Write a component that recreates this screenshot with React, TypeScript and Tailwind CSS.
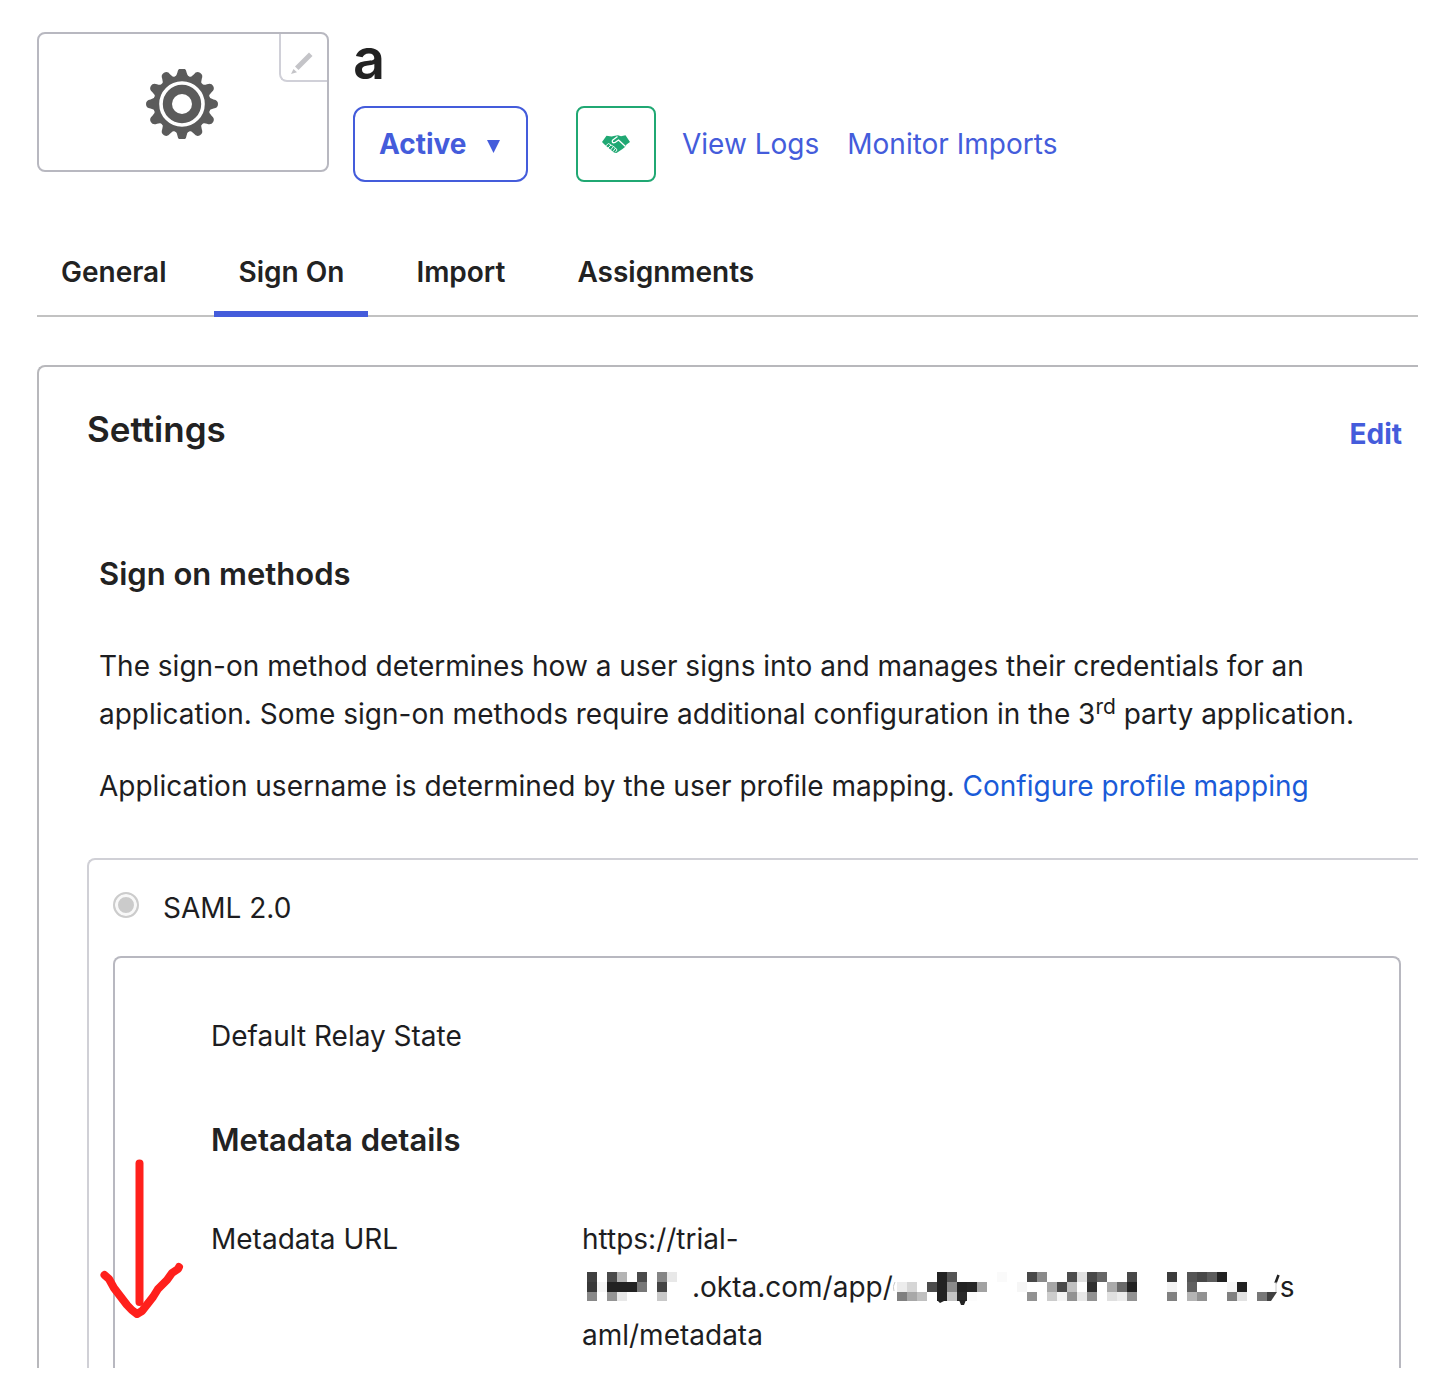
import React from "react";

type Cell = [col: number, row: number, shade: string];

const hostCells: Cell[] = [
  [0, 0, "#404040"], [2, 0, "#4a4a4a"], [3, 0, "#b4b4b4"], [5, 0, "#4a4a4a"], [7, 0, "#858585"], [8, 0, "#e8e8e8"],
  [0, 1, "#383838"], [1, 1, "#f5f5f5"], [2, 1, "#222222"], [3, 1, "#222222"], [4, 1, "#222222"], [5, 1, "#777777"], [7, 1, "#444444"],
  [0, 2, "#888888"], [2, 2, "#949494"], [3, 2, "#e8e8e8"], [7, 2, "#c8c8c8"],
];

const pathCells: Cell[] = [
  [4, 0, "#222222"], [5, 0, "#555555"], [10, 0, "#fafafa"], [13, 0, "#484848"], [14, 0, "#8a8a8a"], [17, 0, "#4c4c4c"],
  [18, 0, "#e0e0e0"], [19, 0, "#484848"], [20, 0, "#666666"], [23, 0, "#484848"], [27, 0, "#3c3c3c"], [29, 0, "#555555"],
  [30, 0, "#484848"], [31, 0, "#5c5c5c"], [32, 0, "#222222"],
  [0, 1, "#ececec"], [1, 1, "#d6d6d6"], [3, 1, "#4c4c4c"], [4, 1, "#222222"], [5, 1, "#8a8a8a"], [6, 1, "#222222"],
  [7, 1, "#262626"], [8, 1, "#a2a2a2"], [12, 1, "#f6f6f6"], [15, 1, "#a6a6a6"], [16, 1, "#4a4a4a"], [17, 1, "#c0c0c0"],
  [19, 1, "#303030"], [21, 1, "#aaaaaa"], [22, 1, "#6a6a6a"], [23, 1, "#222222"], [27, 1, "#f2f2f2"], [29, 1, "#606060"],
  [33, 1, "#f6f6f6"], [34, 1, "#222222"],
  [0, 2, "#808080"], [1, 2, "#a8a8a8"], [2, 2, "#c0c0c0"], [4, 2, "#222222"], [5, 2, "#c4c4c4"], [6, 2, "#2a2a2a"],
  [7, 2, "#fcfcfc"], [13, 2, "#929292"], [15, 2, "#cccccc"], [16, 2, "#f4f4f4"], [17, 2, "#929292"], [18, 2, "#e8e8e8"],
  [19, 2, "#929292"], [21, 2, "#e0e0e0"], [22, 2, "#ececec"], [23, 2, "#929292"], [27, 2, "#808080"], [29, 2, "#b4b4b4"],
  [30, 2, "#929292"], [33, 2, "#808080"], [34, 2, "#e2e2e2"], [36, 2, "#787878"],
];

function Mosaic({ cells, left }: { cells: Cell[]; left: number }) {
  return (
    <>
      {cells.map(([c, r, fill]) => (
        <rect key={`${c}-${r}`} x={c * 10 + left} y={r * 10} width={10} height={r === 2 ? 9 : 10} fill={fill} shapeRendering="crispEdges" />
      ))}
    </>
  );
}

function GearLogo() {
  return (
    <svg viewBox="-36 -35 72 70" className="mt-1 mr-0.5 h-[70px] w-[72px]" aria-hidden="true">
      <g fill="#5b5b5b">
        {Array.from({ length: 12 }, (_, i) => (
          <path key={i} d="M-8-26Q-5-28.500-4.600-31.500Q-4-36 0-36Q4-36 4.600-31.500Q5-28.500 8-26Z" transform={`rotate(${i * 30})`} />
        ))}
        <circle r="28.500" />
      </g>
      <circle r="21" fill="none" stroke="#ffffff" strokeWidth="3.600" />
      <circle r="10" fill="#ffffff" />
    </svg>
  );
}

function PencilIcon() {
  return (
    <svg viewBox="0 0 24 24" className="h-6 w-6" fill="#c4c4c8" aria-hidden="true">
      <path d="M5 15.5 19 1.5 22.5 5 8.500 19Z" />
      <path d="M3.500 18 7 21.200 1 23Z" />
    </svg>
  );
}

function HandshakeIcon() {
  return (
    <svg viewBox="0 0 28 18" className="h-[18px] w-7" aria-hidden="true">
      <path fill="#20a873" d="M4.500 0.800 9.500 1.500 13 0.800 16 0.300 19 1.200 23.500 0.300 28 7 24.500 9.500 23 12 20.500 14 17.500 16 14.500 18 12 17.500 3.500 10.500 0 7Z" />
      <path fill="none" stroke="#ffffff" strokeWidth="1.300" strokeLinejoin="round" d="M15.500 1.500 10.500 5.200Q9.500 8.500 13 7.500L16.500 5 23.500 11.500" />
      <path fill="none" stroke="#ffffff" strokeWidth="0.900" d="M3 11.500 6.500 8.500 9 10 5.500 13.500M9 10 11.500 11.500 8.500 15M11.500 11.500 13.500 13 11 16.500M13.500 13 15 15 13.500 17" />
    </svg>
  );
}

const tabs = ["General", "Sign On", "Import", "Assignments"];

export default function App() {
  return (
    <main className="relative bg-white pt-8 pr-[25px] pl-[37px] font-['Inter',sans-serif] text-[28px] leading-[48px] text-[#1d1d21]">
      <header className="flex items-start gap-6">
        <div className="relative flex h-[140px] w-[292px] shrink-0 items-center justify-center rounded-lg border-2 border-[#b8b8c0]">
          <GearLogo />
          <button type="button" aria-label="Edit logo" className="absolute top-0 right-0 flex h-12 w-12 items-center justify-center rounded-bl-lg border-b-2 border-l-2 border-[#d0d0d8] pt-3 pr-1">
            <PencilIcon />
          </button>
        </div>
        <div>
          <h1 className="pt-0.5 text-[56px] leading-[50px] font-semibold text-[#222222]">a</h1>
          <div className="mt-[22px] flex items-center">
            <button type="button" className="flex h-[76px] w-[175px] items-center gap-5 rounded-xl border-2 border-[#445cdb] px-6 font-bold text-[#445cdb]">
              Active
              <svg viewBox="0 0 13 13" className="mt-1 h-[13px] w-[13px]" fill="currentColor" aria-hidden="true">
                <path d="M0 0H13L6.500 13Z" />
              </svg>
            </button>
            <button type="button" aria-label="Provisioning" className="ml-12 flex h-[76px] w-20 items-center justify-center rounded-lg border-2 border-[#20a873]">
              <HandshakeIcon />
            </button>
            <a href="#logs" className="ml-[26px] text-[#445cdb]">View Logs</a>
            <a href="#imports" className="ml-7 text-[#445cdb]">Monitor Imports</a>
          </div>
        </div>
      </header>

      <nav className="mt-12 flex gap-6 border-b-2 border-[#c2c2c2] text-[#222222]">
        {tabs.map((t) => (
          <a
            key={t}
            href="#tab"
            className={
              t === "Sign On"
                ? "-mb-0.5 border-b-[6px] border-[#445cdb] px-6 pt-6 pb-[21px] leading-9 font-semibold"
                : "-mb-0.5 border-b-[6px] border-transparent px-6 pt-6 pb-[21px] leading-9 font-semibold"
            }
          >
            {t}
          </a>
        ))}
      </nav>

      <section className="mt-12 rounded-tl-lg border-t-2 border-l-2 border-[#b8b8bc] pt-11 pl-12">
        <div className="flex items-end justify-between pr-4">
          <h2 className="text-[35px] leading-9 font-semibold text-[#222222]">Settings</h2>
          <button type="button" className="leading-[26px] font-bold text-[#445cdb]">Edit</button>
        </div>
        <div className="mt-[107px] pl-3">
          <h3 className="text-[31px] leading-10 font-semibold text-[#222222]">Sign on methods</h3>
          <p className="mt-12">
            The sign-on method determines how a user signs into and manages their credentials for an application. Some
            sign-on methods require additional configuration in the 3<sup>rd</sup> party application.
          </p>
          <p className="mt-6">
            Application username is determined by the user profile mapping.{" "}
            <a href="#mapping" className="text-[#1a5bd8]">Configure profile mapping</a>
          </p>
        </div>

        <div className="mt-12 rounded-tl-lg border-t-2 border-l-2 border-[#d0d0d6] pt-6 pr-[17px] pl-6">
          <label className="flex items-start gap-6">
            <input
              type="radio"
              disabled
              checked
              readOnly
              className="mt-2 h-[26px] w-[26px] shrink-0 appearance-none rounded-full border-2 border-[#cccccc] bg-[#cbcbcb] shadow-[inset_0_0_0_3px_#f8f8f8]"
            />
            SAML 2.0
          </label>
          <div className="mt-6 rounded-t-lg border-x-2 border-t-2 border-[#b8b8c0] pt-[54px] pr-6 pb-[9px] pl-24">
            <div>Default Relay State</div>
            <h3 className="mt-14 text-[31px] font-semibold text-[#222222]">Metadata details</h3>
            <dl className="mt-[51px] flex">
              <dt className="w-[371px] shrink-0">Metadata URL</dt>
              <dd>
                <div>https://trial-</div>
                <div className="flex items-center whitespace-nowrap">
                  <svg viewBox="0 0 110 30" className="h-[30px] w-[110px]" role="img" aria-label="Redacted">
                    <Mosaic cells={hostCells} left={5} />
                  </svg>
                  .okta.com/app/
                  <svg viewBox="0 0 387 34" className="mt-1 h-[34px] w-[387px]" role="img" aria-label="Redacted">
                    <Mosaic cells={pathCells} left={4} />
                    <path d="M44 28H53L47 31ZM66 28H73L71 33H68Z" fill="#222222" />
                    <path d="M374 20H384L378 29H374Z" fill="#404040" />
                    <path d="M385.500 3 382.500 11" stroke="#222222" strokeWidth="2.500" />
                    <path d="M383 10V20" stroke="#c8c8c8" />
                    <path d="M2 10Q-1 15 1 19" stroke="#c8c8c8" fill="none" />
                  </svg>
                  s
                </div>
                <div>aml/metadata</div>
              </dd>
            </dl>
          </div>
        </div>
      </section>

      <svg viewBox="0 0 84 160" className="absolute top-[1159px] left-[100px] h-40 w-[84px]" fill="none" stroke="#ff201c" strokeWidth="8" strokeLinecap="round" strokeLinejoin="round" aria-hidden="true">
        <path d="M39.500 4.500V143" />
        <path d="M4.500 116 9 120 14 129 27 146Q32 152 37 155L42 152 53 138 58 130 67 121 72 114 78 110 79 108" />
      </svg>
    </main>
  );
}
